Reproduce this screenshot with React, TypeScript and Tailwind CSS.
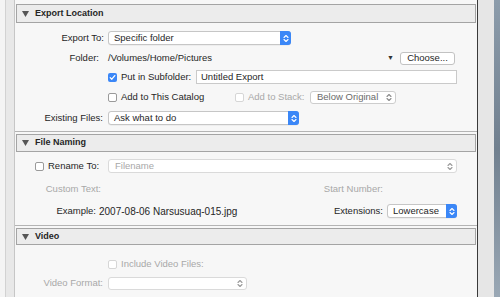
import React from "react";

function Triangle() {
  return (
    <svg width="7" height="6" viewBox="0 0 7 6" className="shrink-0">
      <path d="M0 0 H7 L3.5 6 Z" fill="#555" />
    </svg>
  );
}

function Header({ title, h }: { title: string; h: string }) {
  return (
    <div
      className={`mx-[1px] ${h} border border-[#a4a4a4] bg-[#ececec] flex items-center pl-[5px]`}
    >
      <Triangle />
      <span className="ml-[6px] text-[9px] font-bold text-[#262626]">{title}</span>
    </div>
  );
}

function UpDown({ color }: { color: string }) {
  return (
    <svg width="6" height="9" viewBox="0 0 6 9" className="shrink-0">
      <path
        d="M1 3.5 L3 1.5 L5 3.5 M1 5.5 L3 7.5 L5 5.5"
        fill="none"
        stroke={color}
        strokeWidth="1.1"
        strokeLinecap="round"
        strokeLinejoin="round"
      />
    </svg>
  );
}

function BlueSelect({ value, w }: { value: string; w: string }) {
  return (
    <div
      className={`${w} h-[14px] flex items-stretch rounded-[3px] border border-[#c6c6c6] bg-white shadow-[0_0.5px_0_rgba(0,0,0,0.08)]`}
    >
      <span className="flex-1 pl-[5px] leading-[12px] text-[#262626] truncate">{value}</span>
      <span className="w-[11px] -my-[1px] -mr-[1px] rounded-r-[3px] bg-[#3b87f7] flex items-center justify-center">
        <UpDown color="#fff" />
      </span>
    </div>
  );
}

function Checkbox({ checked, disabled }: { checked?: boolean; disabled?: boolean }) {
  if (checked) {
    return (
      <span className="w-[9px] h-[9px] rounded-[2px] bg-[#3b87f7] flex items-center justify-center shrink-0">
        <svg width="7" height="7" viewBox="0 0 7 7">
          <path
            d="M1.2 3.6 L2.8 5.2 L5.8 1.6"
            fill="none"
            stroke="#fff"
            strokeWidth="1.3"
            strokeLinecap="round"
            strokeLinejoin="round"
          />
        </svg>
      </span>
    );
  }
  return (
    <span
      className={`block w-[9px] h-[9px] rounded-[2px] border bg-white shrink-0 ${
        disabled ? "border-[#d6d6d6]" : "border-[#9a9a9a]"
      }`}
    />
  );
}

export default function App() {
  return (
    <div
      className="w-[500px] h-[297px] flex overflow-hidden bg-[#f4f4f4] text-[9.5px] text-[#262626]"
      style={{ fontFamily: '"Liberation Sans", Arial, sans-serif' }}
    >
      <div className="w-[6px] bg-[#f4f4f4] border-r border-[#d2d2d2]" />
      <div className="w-[9px] bg-[#e8e8e8] border-r border-[#c6c6c6]" />

      <div className="w-[462px] bg-[#f7f7f7] flex flex-col pt-[4px]">
        <Header title="Export Location" h="h-[19px]" />

        <div className="mt-[5px] h-[20px] flex items-center">
          <span className="w-[89px] text-right">Export To:</span>
          <span className="ml-[4px]">
            <BlueSelect value="Specific folder" w="w-[183px]" />
          </span>
        </div>

        <div className="h-[20px] flex items-center">
          <span className="w-[84px] text-right">Folder:</span>
          <span className="ml-[9px]">/Volumes/Home/Pictures</span>
          <span className="ml-auto text-[7px] text-[#333]">▼</span>
          <span className="ml-[6px] mr-[22px] w-[55px] h-[13px] rounded-[3px] border border-[#c2c2c2] bg-white flex items-center justify-center leading-none">
            Choose...
          </span>
        </div>

        <div className="h-[18px] flex items-center">
          <span className="w-[93px]" />
          <Checkbox checked />
          <span className="ml-[4px] w-[75px]">Put in Subfolder:</span>
          <span className="mr-[20px] flex-1 h-[14px] border border-[#cacaca] bg-white pl-[4px] leading-[12px]">
            Untitled Export
          </span>
        </div>

        <div className="h-[22px] flex items-center">
          <span className="w-[93px]" />
          <Checkbox />
          <span className="ml-[4px] w-[114px]">Add to This Catalog</span>
          <Checkbox disabled />
          <span className="ml-[4px] w-[62px] text-[#a8a8a8]">Add to Stack:</span>
          <span className="w-[86px] h-[13px] rounded-[3px] border border-[#cdcdcd] bg-white flex items-center pl-[6px] pr-[3px] text-[#6a6a6a]">
            <span className="flex-1">Below Original</span>
            <UpDown color="#8a8a8a" />
          </span>
        </div>

        <div className="h-[20px] flex items-center">
          <span className="w-[88px] text-right">Existing Files:</span>
          <span className="ml-[5px]">
            <BlueSelect value="Ask what to do" w="w-[191px]" />
          </span>
        </div>

        <div className="mt-[3px] h-[1px] bg-[#b4b4b4]" />
        <div className="mt-[2px]">
          <Header title="File Naming" h="h-[18px]" />
        </div>

        <div className="mt-[4px] h-[20px] flex items-center">
          <span className="w-[20px]" />
          <Checkbox />
          <span className="ml-[4px] w-[60px]">Rename To:</span>
          <span className="mr-[20px] flex-1 h-[14px] rounded-[3px] border border-[#dadada] bg-white flex items-center pl-[6px] pr-[3px] text-[#a8a8a8]">
            <span className="flex-1">Filename</span>
            <UpDown color="#9a9a9a" />
          </span>
        </div>

        <div className="mt-[3px] h-[21px] flex items-center text-[#a8a8a8]">
          <span className="w-[86px] text-right">Custom Text:</span>
          <span className="ml-auto mr-[94px]">Start Number:</span>
        </div>

        <div className="h-[22px] flex items-center">
          <span className="w-[81px] text-right">Example:</span>
          <span className="ml-[3px] text-[10px]">2007-08-06 Narsusuaq-015.jpg</span>
          <span className="ml-auto">Extensions:</span>
          <span className="ml-[4px] mr-[20px]">
            <BlueSelect value="Lowercase" w="w-[70px]" />
          </span>
        </div>

        <div className="mt-[3px] h-[1px] bg-[#b4b4b4]" />
        <div className="mt-[2px]">
          <Header title="Video" h="h-[17px]" />
        </div>

        <div className="mt-[10px] h-[19px] flex items-center text-[#a8a8a8]">
          <span className="w-[93px]" />
          <Checkbox disabled />
          <span className="ml-[4px]">Include Video Files:</span>
        </div>

        <div className="h-[19px] flex items-center text-[#a8a8a8]">
          <span className="w-[88px] text-right">Video Format:</span>
          <span className="ml-[5px] w-[139px] h-[13px] rounded-[3px] border border-[#dadada] bg-white flex items-center justify-end pr-[3px]">
            <UpDown color="#9a9a9a" />
          </span>
        </div>
      </div>

      <div className="w-[1px] bg-[#3a3a3a]" />
      <div className="w-[16px] bg-[#e6e6e6]" />
      <div className="flex-1 bg-gradient-to-b from-[#8c9cab] via-[#71808f] to-[#9aa8b5]" />
    </div>
  );
}
